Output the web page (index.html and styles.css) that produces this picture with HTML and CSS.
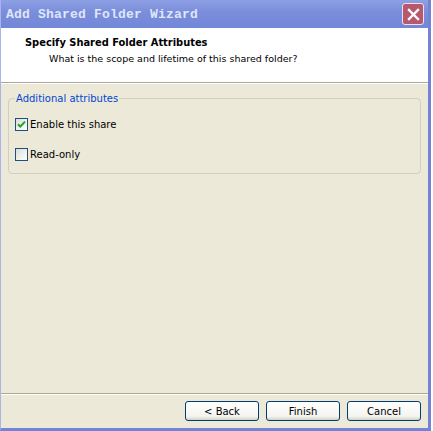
FILE: index.html
```html
<!DOCTYPE html>
<html>
<head>
<meta charset="utf-8">
<link rel="stylesheet" href="styles.css">
</head>
<body>
<div class="window">
  <div class="titlebar">
    <span class="title">Add Shared Folder Wizard</span>
    <span class="close"><svg width="13" height="13" viewBox="0 0 13 13"><path d="M2 2 L11 11 M11 2 L2 11" stroke="#fff" stroke-width="2.4" stroke-linecap="square"/></svg></span>
  </div>
  <div class="client">
    <div class="header">
      <div class="h-title">Specify Shared Folder Attributes</div>
      <div class="h-sub">What is the scope and lifetime of this shared folder?</div>
    </div>
    <div class="body">
      <fieldset class="group">
        <legend>Additional attributes</legend>
        <label class="check"><span class="box checked"><svg width="9" height="9" viewBox="0 0 9 9"><path d="M1 4.2 L3.3 6.6 L8 1.6" fill="none" stroke="#21a121" stroke-width="2"/></svg></span>Enable this share</label>
        <label class="check"><span class="box"></span>Read-only</label>
      </fieldset>
    </div>
    <div class="footer">
      <button class="btn">&lt; Back</button>
      <button class="btn">Finish</button>
      <button class="btn">Cancel</button>
    </div>
  </div>
</div>
</body>
</html>
```
FILE: styles.css
```css
html, body { margin: 0; padding: 0; background: #ffffff; }
body { width: 433px; height: 431px; overflow: hidden; font-family: "DejaVu Sans", sans-serif; font-size: 10px; }
.window {
  width: 427px; height: 428px;
  border-left: 1px solid #a8b4ec;
  border-right: 3px solid #7384d6;
  border-bottom: 3px solid #7384d6;
  background: #7b8edb;
  display: flex; flex-direction: column;
}
.titlebar {
  height: 28px; flex: none;
  background: linear-gradient(#8ea0e4, #7b8edb 40%, #7387d8);
  display: flex; align-items: center; justify-content: space-between;
  padding: 0 4px 0 5px;
}
.title {
  font-family: "Liberation Mono", monospace; font-weight: bold; font-size: 13px;
  color: #dfe6fa; letter-spacing: 0.2px;
}
.close {
  border: 1px solid #f0e0e4; border-radius: 3px;
  background: #b8586c; display: flex; align-items: center; justify-content: center;
  box-sizing: border-box; width: 22px; height: 22px;
}
.client { flex: 1; display: flex; flex-direction: column; background: #ece9d8; }
.header {
  height: 54px; background: #ffffff; flex: none;
  border-bottom: 1px solid #aca899;
  box-shadow: 0 1px 0 #ffffff;
  padding: 0 0 0 24px;
}
.h-title { font-weight: bold; font-size: 9.9px; color: #000; margin-top: 9px; }
.h-sub { font-size: 9.5px; color: #000; margin: 5px 0 0 24px; }
.body { flex: 1; padding: 10px 7px 0 7px; }
.group {
  margin: 0; padding: 13px 6px 12px 6px;
  border: 1px solid #d0d0bf; border-radius: 4px;
  display: flex; flex-direction: column; gap: 16px;
}
.group legend { color: #0046d5; font-size: 10px; padding: 0 1px; margin-left: 0; }
.check { display: flex; align-items: center; gap: 2px; font-size: 10px; color: #000; height: 14px; }
.box {
  width: 11px; height: 11px; border: 1px solid #1c5180;
  background: linear-gradient(135deg, #dcdcd7, #ffffff);
  display: flex; align-items: center; justify-content: center;
}
.footer {
  height: 34px; flex: none;
  border-top: 1px solid #aca899;
  box-shadow: inset 0 1px 0 #ffffff;
  display: flex; justify-content: flex-end; align-items: center; gap: 7px;
  padding: 0 7px 0 0;
}
.btn {
  width: 74px; height: 20px; margin: 0; padding: 0;
  border: 1px solid #003c74; border-radius: 3px;
  background: linear-gradient(#ffffff, #f3f3ef 80%, #d6d0c5);
  font-family: "DejaVu Sans", sans-serif; font-size: 10px; color: #000;
}
```
